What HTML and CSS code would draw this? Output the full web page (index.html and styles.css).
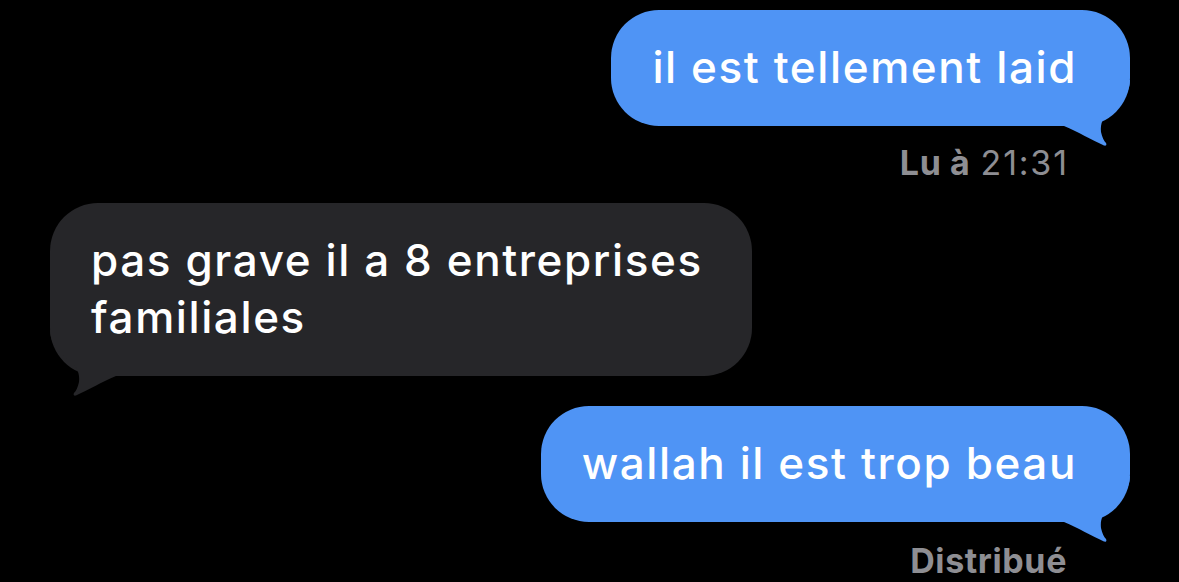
FILE: index.html
```html
<!DOCTYPE html>
<html lang="fr">
<head>
	<meta charset="UTF-8">
	<meta name="viewport" content="width=device-width, initial-scale=1.0">
	<title>Messages</title>
	<link rel="stylesheet" href="styles.css">
</head>
<body>
	<div class="thread">
		<div class="row row--out">
			<div class="bubble bubble--out">
				il est tellement laid
				<svg class="tail tail--out" viewBox="0 0 70 68"><path d="M70 0C70 14 60 24 50 31C43 36 40 44 41 52C42 57 44 61 46 63C47 65 46 66 44 65.5C32 60 18 52 4 46L0 46L0 0Z"/></svg>
			</div>
		</div>
		<div class="status"><b>Lu à</b> <span class="status__time">21:31</span></div>

		<div class="row row--in">
			<div class="bubble bubble--in">
				pas grave il a 8 entreprises familiales
				<svg class="tail tail--in" viewBox="0 0 70 68"><path d="M70 0C70 14 60 24 50 31C43 36 40 44 41 52C42 57 44 61 46 63C47 65 46 66 44 65.5C32 60 18 52 4 46L0 46L0 0Z"/></svg>
			</div>
		</div>

		<div class="row row--out row--gap">
			<div class="bubble bubble--out">
				wallah il est trop beau
				<svg class="tail tail--out" viewBox="0 0 70 68"><path d="M70 0C70 14 60 24 50 31C43 36 40 44 41 52C42 57 44 61 46 63C47 65 46 66 44 65.5C32 60 18 52 4 46L0 46L0 0Z"/></svg>
			</div>
		</div>
		<div class="status status--last"><b>Distribué</b></div>
	</div>
</body>
</html>
```

FILE: styles.css
```css
html, body {
	margin: 0;
	background: #000;
}
body {
	font-family: Inter, "Noto Sans", sans-serif;
	color: #fff;
	overflow: hidden;
}
.thread {
	display: flex;
	flex-direction: column;
	padding: 10px 49px 0 50px;
}
.row {
	display: flex;
}
.row--out {
	justify-content: flex-end;
}
.row--in {
	justify-content: flex-start;
	margin-top: 21px;
}
.row--gap {
	margin-top: 30px;
}
.bubble {
	position: relative;
	isolation: isolate;
	box-sizing: border-box;
	max-width: 702px;
	padding: 29px 53px 30px 41px;
	border-radius: 48px;
	font-size: 44px;
	line-height: 57px;
	font-weight: 500;
	letter-spacing: 1.6px;
}
.bubble--out {
	background: #4f94f5;
}
.bubble--in {
	padding-right: 40px;
	background: #262629;
}
.tail {
	position: absolute;
	z-index: -1;
	bottom: -22px;
	width: 70px;
	height: 68px;
}
.tail--out {
	right: 0;
	fill: #4f94f5;
}
.tail--in {
	left: 0;
	fill: #262629;
	transform: scaleX(-1);
}
.status {
	margin-top: 18px;
	padding-right: 63px;
	text-align: right;
	font-size: 34px;
	line-height: 38px;
	color: #8e8e93;
	font-weight: 400;
	letter-spacing: 0.6px;
}
.status b {
	font-weight: 700;
}
.status__time {
	letter-spacing: 1.8px;
	margin-right: -1.8px;
}
.status--last {
	margin-top: 20px;
}
```
